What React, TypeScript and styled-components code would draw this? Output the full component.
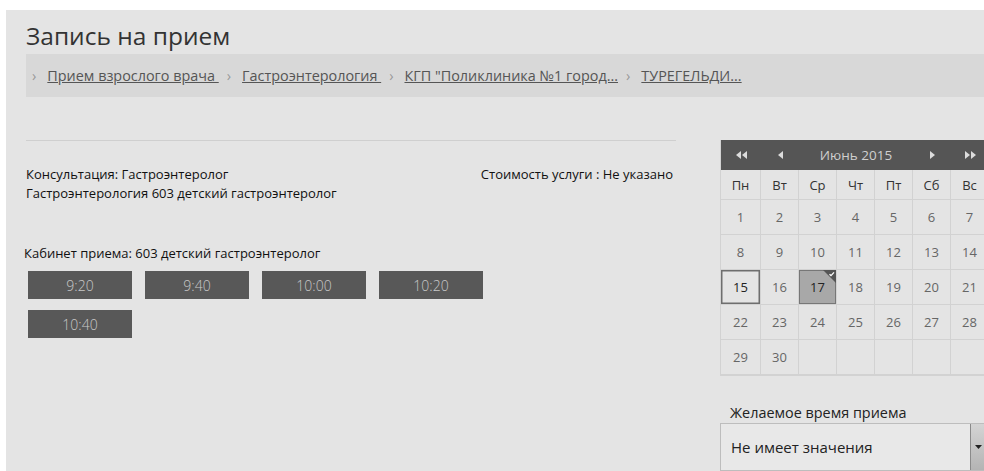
import * as React from 'react'
import styled, { createGlobalStyle } from 'styled-components'

const GlobalStyle = createGlobalStyle`
  html, body {
    margin: 0;
    background: #ffffff;
  }
  body {
    padding: 10px 0 0 6px;
    font-family: "Open Sans", "Noto Sans", sans-serif;
    overflow: hidden;
  }
`

const Page = styled.div`
  background: #e4e4e4;
  height: 461px;
  padding: 12px 0 0 20px;
  box-sizing: border-box;
  overflow: hidden;
`

const Title = styled.h1`
  margin: 0 0 4px;
  font-size: 24.5px;
  font-weight: 400;
  line-height: 28px;
  color: #333;
`

const Crumbs = styled.nav`
  display: flex;
  align-items: center;
  height: 43px;
  background: #d8d8d8;
  padding-left: 6px;
  font-size: 14.4px;
  color: #555;
`

const Sep = styled.span`
  color: #999;
  margin: 0 11px 0 0;
`

const Crumb = styled.a`
  color: #555;
  text-decoration: underline;
  margin-right: 8px;
  white-space: pre;
`

const Body = styled.div`
  display: flex;
  margin-top: 43px;
`

const Main = styled.div`
  flex: 0 0 650px;
  border-top: 1px solid #cfcfcf;
  padding-top: 24px;
  font-size: 13px;
  color: #111;
`

const InfoRow = styled.div`
  display: flex;
  justify-content: space-between;
  line-height: 19px;
  padding-right: 3px;
`

const Cabinet = styled.div`
  margin-top: 41px;
  line-height: 19px;
  margin-left: -2px;
`

const Slots = styled.div`
  display: grid;
  grid-template-columns: repeat(4, 104px);
  column-gap: 13px;
  row-gap: 11px;
  padding: 8px 0 0 2px;
`

const Slot = styled.button`
  height: 28px;
  border: none;
  background: #585858;
  color: #c8c8c8;
  font-family: "Open Sans", "Noto Sans", sans-serif;
  font-size: 14px;
  font-weight: 300;
  padding: 0;
  cursor: pointer;
`

const Side = styled.aside`
  flex: 0 0 auto;
  margin-left: 44px;
  display: flex;
  flex-direction: column;
`

const Calendar = styled.div`
  display: grid;
  grid-template-columns: 40px repeat(6, 38px);
  grid-template-rows: 30px 30px repeat(5, 35px);
  border-left: 1px solid #d2d2d2;
  border-bottom: 1px solid #d2d2d2;
`

const NavCell = styled.div<{ $span?: number }>`
  grid-column: span ${p => p.$span ?? 1};
  background: #555555;
  color: #d8d8d8;
  display: flex;
  align-items: center;
  justify-content: center;
`

const MonthTitle = styled(NavCell)`
  color: #cfcfcf;
  font-size: 13.5px;
`

const DayName = styled.div`
  display: flex;
  align-items: center;
  justify-content: center;
  border-right: 1px solid #d2d2d2;
  border-bottom: 1px solid #d2d2d2;
  font-size: 13px;
  color: #333;
`

const Day = styled.div<{ $today?: boolean; $picked?: boolean }>`
  position: relative;
  display: flex;
  align-items: center;
  justify-content: center;
  border-right: 1px solid #d2d2d2;
  border-bottom: 1px solid #d2d2d2;
  font-size: 13px;
  color: ${p => (p.$today || p.$picked ? '#222' : '#666')};
  background: ${p => (p.$picked ? '#a8a8a8' : 'transparent')};
  box-shadow: ${p =>
    p.$today ? 'inset 0 0 0 1.5px #6e6e6e' : p.$picked ? 'inset 0 0 0 1px #777' : 'none'};
`

const Corner = styled.svg`
  position: absolute;
  top: 0;
  right: 0;
`

const Label = styled.div`
  margin-top: 28px;
  padding-left: 10px;
  font-size: 14.4px;
  line-height: 18px;
  color: #222;
`

const Select = styled.div`
  display: flex;
  margin-top: 1px;
  height: 48px;
  width: 266px;
  border: 1px solid #bdbdbd;
  background: #e8e8e8;
  box-sizing: border-box;
`

const SelectText = styled.span`
  flex: 1;
  display: flex;
  align-items: center;
  padding-left: 10px;
  font-size: 15px;
  color: #222;
`

const SelectButton = styled.span`
  width: 14px;
  display: flex;
  align-items: center;
  justify-content: center;
  border-left: 1px solid #8a8a8a;
  background: linear-gradient(#d4d4d4, #b4b4b4);
`

const crumbs = [
  'Прием взрослого врача ',
  'Гастроэнтерология ',
  'КГП "Поликлиника №1 город...',
  'ТУРЕГЕЛЬДИ...',
]

const slots = ['9:20', '9:40', '10:00', '10:20', '10:40']
const dayNames = ['Пн', 'Вт', 'Ср', 'Чт', 'Пт', 'Сб', 'Вс']

const Arrow = ({ dir, double }: { dir: 'l' | 'r'; double?: boolean }) => {
  const tri = (x: number) =>
    dir === 'l' ? `M${x + 5} 0 L${x} 4 L${x + 5} 8 Z` : `M${x} 0 L${x + 5} 4 L${x} 8 Z`
  return (
    <svg width={double ? 11 : 5} height={8} viewBox={`0 0 ${double ? 11 : 5} 8`}>
      <path d={tri(0)} fill="#dcdcdc" />
      {double && <path d={tri(6)} fill="#dcdcdc" />}
    </svg>
  )
}

export default function App() {
  const days: (number | null)[] = []
  for (let i = 1; i <= 30; i++) days.push(i)
  while (days.length < 35) days.push(null)

  return (
    <Page>
      <GlobalStyle />
      <Title>Запись на прием</Title>
      <Crumbs>
        {crumbs.map(c => (
          <React.Fragment key={c}>
            <Sep>›</Sep>
            <Crumb href="#">{c}</Crumb>
          </React.Fragment>
        ))}
      </Crumbs>
      <Body>
        <Main>
          <InfoRow>
            <span>Консультация: Гастроэнтеролог</span>
            <span>Стоимость услуги : Не указано</span>
          </InfoRow>
          <InfoRow>
            <span>Гастроэнтерология 603 детский гастроэнтеролог</span>
          </InfoRow>
          <Cabinet>Кабинет приема: 603 детский гастроэнтеролог</Cabinet>
          <Slots>
            {slots.map(s => (
              <Slot key={s}>{s}</Slot>
            ))}
          </Slots>
        </Main>
        <Side>
          <Calendar>
            <NavCell><Arrow dir="l" double /></NavCell>
            <NavCell><Arrow dir="l" /></NavCell>
            <MonthTitle $span={3}>Июнь 2015</MonthTitle>
            <NavCell><Arrow dir="r" /></NavCell>
            <NavCell><Arrow dir="r" double /></NavCell>
            {dayNames.map(d => (
              <DayName key={d}>{d}</DayName>
            ))}
            {days.map((d, i) => (
              <Day key={i} $today={d === 15} $picked={d === 17}>
                {d}
                {d === 17 && (
                  <Corner width="13" height="13" viewBox="0 0 13 13">
                    <path d="M0 0 H13 V13 Z" fill="#555" />
                    <path d="M6.5 4.2 L8 5.6 L11 2.4" stroke="#fff" strokeWidth="1.3" fill="none" />
                  </Corner>
                )}
              </Day>
            ))}
          </Calendar>
          <Label>Желаемое время приема</Label>
          <Select>
            <SelectText>Не имеет значения</SelectText>
            <SelectButton>
              <svg width="7" height="4" viewBox="0 0 7 4">
                <path d="M0 0 H7 L3.5 4 Z" fill="#222" />
              </svg>
            </SelectButton>
          </Select>
        </Side>
      </Body>
    </Page>
  )
}
